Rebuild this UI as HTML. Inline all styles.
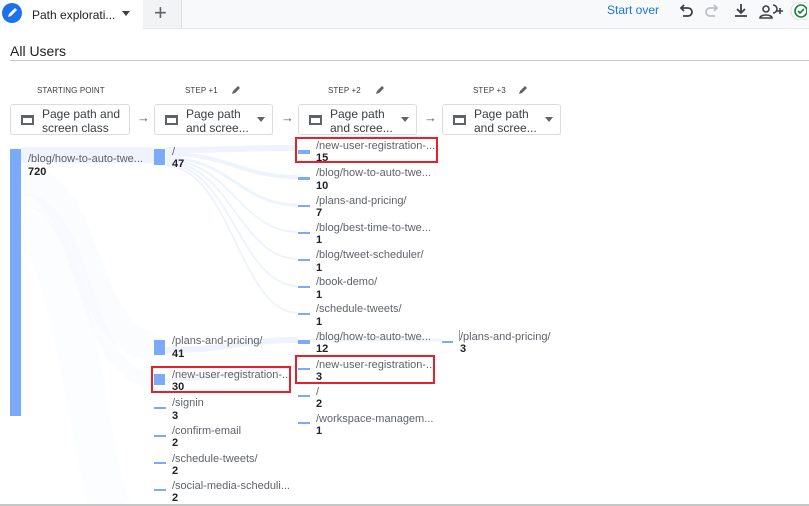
<!DOCTYPE html>
<html><head><meta charset="utf-8"><style>
*{margin:0;padding:0;box-sizing:border-box}
body{width:809px;height:506px;overflow:hidden;background:#fff;font-family:"Liberation Sans",Arial,sans-serif;position:relative;color:#3c4043}
.a{position:absolute}
.top{left:0;top:0;width:809px;height:29px;background:#f8f9fa;border-bottom:1px solid #e8eaed}
.lbl{font-size:11px;color:#5f6368;white-space:nowrap}
.num{font-size:11px;font-weight:bold;color:#202124}
.box{height:31px;border:1px solid #dadce0;border-radius:3px;background:#fff;font-size:12px;color:#3c4043;line-height:14px}
.bar{background:#7baaf7}
.red{border:2px solid #e8202a}
.hdr{font-size:8px;color:#3c4043;letter-spacing:0.1px}
</style></head><body>
<div class="a top"></div>
<div class="a" style="left:0;top:0;width:143px;height:29px;background:#fff"></div>
<div class="a" style="left:143px;top:0;width:39px;height:28px;background:#f1f3f4;border-right:1px solid #e0e0e0"></div>
<svg class="a" style="left:2px;top:3px" width="20" height="20" viewBox="0 0 20 20"><circle cx="10" cy="10" r="10" fill="#1a73e8"/><path d="M6 14l1-3 6-6 2 2-6 6z" fill="#fff"/></svg>
<div class="a" style="left:32px;top:8px;font-size:12px;color:#202124">Path explorati...</div>
<div class="a" style="left:122px;top:11px;border:4px solid transparent;border-top:5px solid #3c4043"></div>
<div class="a" style="left:154px;top:0px;font-size:22px;color:#5f6368;font-weight:300">+</div>
<div class="a" style="left:607px;top:3px;font-size:12px;color:#1a73e8">Start over</div>
<svg class="a" style="left:677px;top:2px" width="130" height="18" viewBox="0 0 130 18"><path d="M4 6h7a4 4 0 010 8H6M7 3L4 6l3 3" fill="none" stroke="#3c4043" stroke-width="1.8"/><path d="M40 6h-7a4 4 0 000 8h5M37 3l3 3-3 3" fill="none" stroke="#bdc1c6" stroke-width="1.8"/><path d="M64 2v9M60 7l4 4 4-4M58 14h12" fill="none" stroke="#3c4043" stroke-width="1.8"/><circle cx="89" cy="7" r="3" fill="none" stroke="#3c4043" stroke-width="1.6"/><path d="M83 16c0-4 12-4 12 0zM96 3a3 3 0 010 8M100 9h6M103 6v6" fill="none" stroke="#3c4043" stroke-width="1.6"/><rect x="114" y="0" width="20" height="18" rx="9" fill="#fff" stroke="#dadce0"/><circle cx="124" cy="9" r="6" fill="none" stroke="#188038" stroke-width="1.6"/><path d="M121 9l2 2 4-4" fill="none" stroke="#188038" stroke-width="1.6"/></svg>
<div class="a" style="left:10px;top:43px;font-size:14px;color:#202124">All Users</div>
<div class="a" style="left:10px;top:60px;width:799px;height:1px;background:#c4c7c5"></div>

<div class="a hdr" style="left:37px;top:86px">STARTING POINT</div>
<div class="a hdr" style="left:185px;top:86px">STEP +1</div>
<div class="a hdr" style="left:328px;top:86px">STEP +2</div>
<div class="a hdr" style="left:473px;top:86px">STEP +3</div>
<svg class="a" style="left:230px;top:84px" width="12" height="12"><path d="M2 10l1-3 5-5 2 2-5 5z" fill="#5f6368"/></svg>
<svg class="a" style="left:374px;top:84px" width="12" height="12"><path d="M2 10l1-3 5-5 2 2-5 5z" fill="#5f6368"/></svg>
<svg class="a" style="left:517px;top:84px" width="12" height="12"><path d="M2 10l1-3 5-5 2 2-5 5z" fill="#5f6368"/></svg>

<div class="a box" style="left:10px;top:104px;width:120px"><div class="a" style="left:10px;top:10px;width:13px;height:10px;border:2px solid #5f6368;border-top-width:3px"></div><div class="a" style="left:31px;top:2px">Page path and<br>screen class</div></div>
<div class="a box" style="left:154px;top:104px;width:119px"><div class="a" style="left:10px;top:10px;width:13px;height:10px;border:2px solid #5f6368;border-top-width:3px"></div><div class="a" style="left:31px;top:2px">Page path<br>and scree...</div><div class="a" style="left:102px;top:12px;border:4px solid transparent;border-top:5px solid #5f6368"></div></div>
<div class="a box" style="left:298px;top:104px;width:119px"><div class="a" style="left:10px;top:10px;width:13px;height:10px;border:2px solid #5f6368;border-top-width:3px"></div><div class="a" style="left:31px;top:2px">Page path<br>and scree...</div><div class="a" style="left:102px;top:12px;border:4px solid transparent;border-top:5px solid #5f6368"></div></div>
<div class="a box" style="left:442px;top:104px;width:119px"><div class="a" style="left:10px;top:10px;width:13px;height:10px;border:2px solid #5f6368;border-top-width:3px"></div><div class="a" style="left:31px;top:2px">Page path<br>and scree...</div><div class="a" style="left:102px;top:12px;border:4px solid transparent;border-top:5px solid #5f6368"></div></div>
<div class="a" style="left:137px;top:110px;font-size:13px;color:#5f6368">→</div>
<div class="a" style="left:281px;top:110px;font-size:13px;color:#5f6368">→</div>
<div class="a" style="left:424px;top:110px;font-size:13px;color:#5f6368">→</div>

<svg class="a" style="left:0;top:140px" width="809" height="366">
<g fill="none" stroke="#eef3fd">
<path d="M21 15H154" stroke-width="16"/>
<path d="M21 40C90 40 80 200 154 207" stroke-width="30" stroke-opacity="0.25"/>
<path d="M21 60C90 60 80 240 154 240" stroke-width="14" stroke-opacity="0.25"/>
<path d="M21 90C80 90 90 370 120 380" stroke-width="40" stroke-opacity="0.2"/>
<path d="M166 10C230 10 240 8 298 8" stroke-width="6"/>
<path d="M166 14C230 14 240 37 298 37" stroke-width="4"/>
<path d="M166 18C230 18 240 65 298 65" stroke-width="3"/>
<path d="M166 20C230 20 240 92 298 92" stroke-width="2"/>
<path d="M166 22C230 22 240 119 298 119" stroke-width="2"/>
<path d="M166 24C230 24 240 146 298 146" stroke-width="2"/>
<path d="M166 26C230 26 240 173 298 173" stroke-width="2"/>
<path d="M166 210C230 210 240 200 298 200" stroke-width="6"/>
<path d="M166 240C230 240 240 227 298 227" stroke-width="3"/>
<path d="M310 200H442" stroke-width="3"/>
</g></svg>

<div class="a bar" style="left:10px;top:149px;width:11px;height:267px"></div>
<div class="a lbl" style="left:28px;top:153px">/blog/how-to-auto-twe...</div>
<div class="a num" style="left:28px;top:166px">720</div>

<div class="a bar" style="left:154px;top:149px;width:11px;height:16px"></div>
<div class="a lbl" style="left:172px;top:146px">/</div><div class="a num" style="left:172px;top:158px">47</div>
<div class="a bar" style="left:154px;top:340px;width:11px;height:15px"></div>
<div class="a lbl" style="left:172px;top:335px">/plans-and-pricing/</div><div class="a num" style="left:172px;top:348px">41</div>
<div class="a bar" style="left:154px;top:374px;width:11px;height:11px"></div>
<div class="a lbl" style="left:172px;top:369px">/new-user-registration-...</div><div class="a num" style="left:172px;top:381px">30</div>
<div class="a bar" style="left:154px;top:407px;width:12px;height:2px"></div>
<div class="a lbl" style="left:172px;top:397px">/signin</div><div class="a num" style="left:172px;top:410px">3</div>
<div class="a bar" style="left:154px;top:435px;width:12px;height:2px"></div>
<div class="a lbl" style="left:172px;top:425px">/confirm-email</div><div class="a num" style="left:172px;top:437px">2</div>
<div class="a bar" style="left:154px;top:462px;width:12px;height:2px"></div>
<div class="a lbl" style="left:172px;top:453px">/schedule-tweets/</div><div class="a num" style="left:172px;top:465px">2</div>
<div class="a bar" style="left:154px;top:489px;width:12px;height:2px"></div>
<div class="a lbl" style="left:172px;top:480px">/social-media-scheduli...</div><div class="a num" style="left:172px;top:492px">2</div>

<div class="a bar" style="left:298px;top:150px;width:12px;height:4px"></div>
<div class="a lbl" style="left:316px;top:140px">/new-user-registration-...</div><div class="a num" style="left:316px;top:152px">15</div>
<div class="a bar" style="left:298px;top:177px;width:12px;height:3px"></div>
<div class="a lbl" style="left:316px;top:167px">/blog/how-to-auto-twe...</div><div class="a num" style="left:316px;top:180px">10</div>
<div class="a bar" style="left:298px;top:205px;width:12px;height:2px"></div>
<div class="a lbl" style="left:316px;top:195px">/plans-and-pricing/</div><div class="a num" style="left:316px;top:207px">7</div>
<div class="a bar" style="left:298px;top:232px;width:12px;height:2px"></div>
<div class="a lbl" style="left:316px;top:222px">/blog/best-time-to-twe...</div><div class="a num" style="left:316px;top:234px">1</div>
<div class="a bar" style="left:298px;top:259px;width:12px;height:2px"></div>
<div class="a lbl" style="left:316px;top:249px">/blog/tweet-scheduler/</div><div class="a num" style="left:316px;top:262px">1</div>
<div class="a bar" style="left:298px;top:286px;width:12px;height:2px"></div>
<div class="a lbl" style="left:316px;top:276px">/book-demo/</div><div class="a num" style="left:316px;top:289px">1</div>
<div class="a bar" style="left:298px;top:313px;width:12px;height:2px"></div>
<div class="a lbl" style="left:316px;top:303px">/schedule-tweets/</div><div class="a num" style="left:316px;top:316px">1</div>
<div class="a bar" style="left:298px;top:340px;width:12px;height:4px"></div>
<div class="a lbl" style="left:316px;top:331px">/blog/how-to-auto-twe...</div><div class="a num" style="left:316px;top:343px">12</div>
<div class="a bar" style="left:298px;top:368px;width:12px;height:2px"></div>
<div class="a lbl" style="left:316px;top:359px">/new-user-registration-...</div><div class="a num" style="left:316px;top:371px">3</div>
<div class="a bar" style="left:298px;top:395px;width:12px;height:2px"></div>
<div class="a lbl" style="left:316px;top:386px">/</div><div class="a num" style="left:316px;top:398px">2</div>
<div class="a bar" style="left:298px;top:422px;width:12px;height:2px"></div>
<div class="a lbl" style="left:316px;top:413px">/workspace-managem...</div><div class="a num" style="left:316px;top:425px">1</div>

<div class="a bar" style="left:442px;top:341px;width:11px;height:2px"></div>
<div class="a" style="left:459px;top:330px;width:1px;height:11px;background:#9aa0a6"></div>
<div class="a lbl" style="left:460px;top:331px">/plans-and-pricing/</div><div class="a num" style="left:460px;top:343px">3</div>

<div class="a red" style="left:295px;top:137px;width:143px;height:26px"></div>
<div class="a red" style="left:151px;top:366px;width:140px;height:27px"></div>
<div class="a red" style="left:295px;top:355px;width:140px;height:29px"></div>
<div class="a" style="left:0;top:504px;width:809px;height:2px;background:#c4c7c5"></div>
</body></html>
